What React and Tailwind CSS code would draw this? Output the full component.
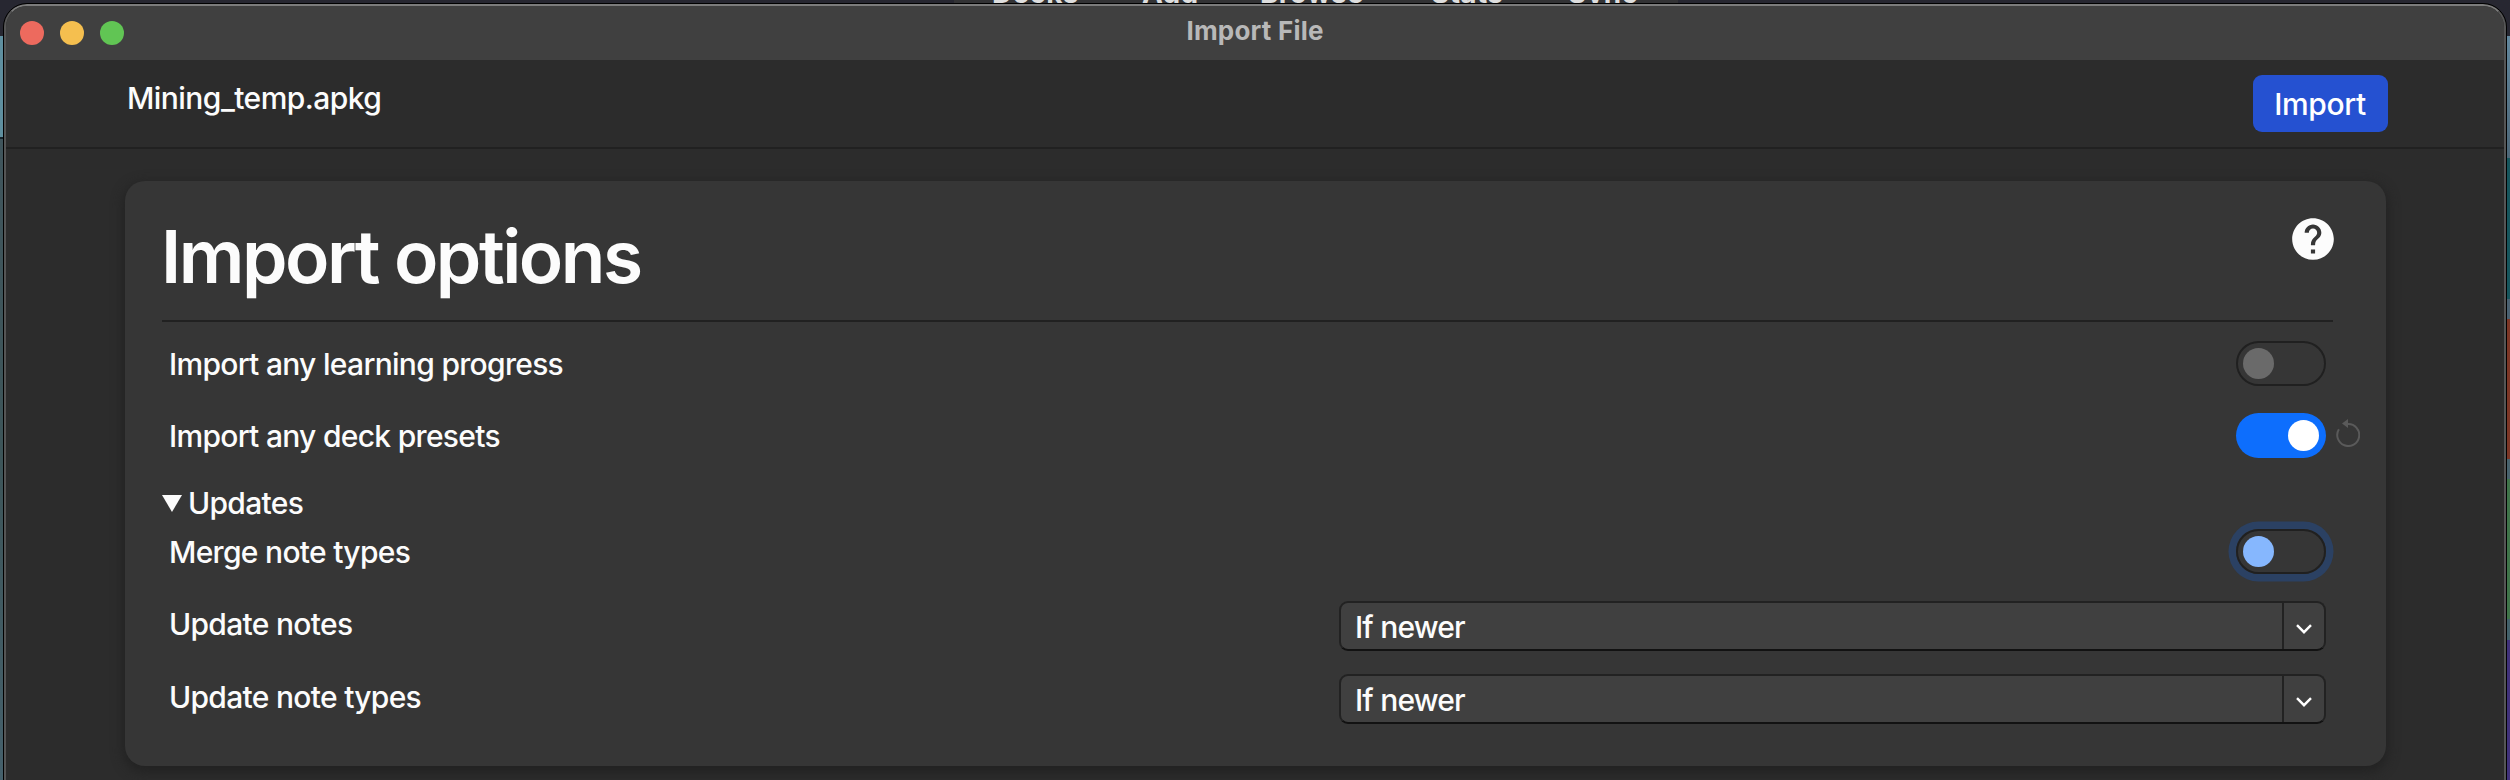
import { MdHelp } from "react-icons/md";

const menuItems = [
  { label: "Decks", box: "ml-[38px] w-[150px]" },
  { label: "Add", box: "w-[118px]" },
  { label: "Browse", box: "w-[171px]" },
  { label: "Stats", box: "w-[137px]" },
  { label: "Sync", box: "w-[80px]" },
];

function Toggle({ on, focused }) {
  const track = on
    ? "bg-[#0d6efd] justify-end"
    : focused
      ? "border-2 border-[#202020] px-[5px] shadow-[0_0_0_7.5px_#2b4163]"
      : "border-2 border-[#202020] px-[5px]";
  const knob = on ? "bg-white" : focused ? "bg-[#86b7fe]" : "bg-[#6a6a6a]";
  return (
    <button className={`flex h-[45px] w-[90px] items-center rounded-full ${on ? "px-[7px]" : ""} ${track}`}>
      <span className={`size-[31px] rounded-full ${knob}`} />
    </button>
  );
}

function ResetIcon() {
  return (
    <svg viewBox="0 0 24 28" className="-mt-1 h-7 w-6" fill="none">
      <path d="M2.9 10.2A11 11 0 1 0 12 5" stroke="#5a5a5a" strokeWidth="2" />
      <path d="M6 4.6 12 0V9Z" fill="#5a5a5a" />
    </svg>
  );
}

function Select({ value }) {
  return (
    <div className="mt-[7px] flex h-[50px] w-[987px] rounded-[9px] border-2 border-[#222] border-b-[#121212] bg-[#404040]">
      <span className="flex-1 pl-[14px] leading-[48px] tracking-[-0.8px]">{value}</span>
      <span className="flex w-[42px] items-center justify-center border-l-2 border-[#222]">
        <svg viewBox="0 0 16 10" className="mt-1.5 h-2.5 w-4" fill="none">
          <path d="M1 1.2 8 8.2 15 1.2" stroke="#fff" strokeWidth="2.4" />
        </svg>
      </span>
    </div>
  );
}

function Row({ label, height, children, extra }) {
  return (
    <div className={`flex items-center pl-[7px] ${height}`}>
      <span className="flex-1 pt-[3px] tracking-[-0.7px]">{label}</span>
      {children}
      <div className="ml-2.5 w-[13px]">
        <div className="w-6">{extra}</div>
      </div>
    </div>
  );
}

export default function App() {
  return (
    <div className="relative h-[780px] w-[2510px] overflow-hidden bg-black font-[Inter,sans-serif] text-[30px] font-medium text-[#fcfcfc]">
      <div className="flex h-full justify-between">
        <div className="flex w-[3px] flex-col">
          <div className="h-[137px] shrink-0 bg-[#5f8f9f]" />
          <div className="h-0.5 bg-[#16242c]" />
          <div className="flex-1 bg-linear-to-b from-[#40555c] via-[#3d5559] to-[#45606b]" />
        </div>
        <div className="flex w-[3px] flex-col">
          <div className="h-[158px] shrink-0 bg-linear-to-b from-[#6790a8] to-[#4c6677]" />
          <div className="h-[141px] bg-[#16555c]" />
          <div className="h-5 bg-[#4a6070]" />
          <div className="h-[140px] bg-[#7d3626]" />
          <div className="h-5 bg-[#48626d]" />
          <div className="h-[140px] bg-[#3f7449]" />
          <div className="h-[21px] bg-[#42606a]" />
          <div className="flex-1 bg-[#40317a]" />
        </div>
      </div>
      <div className="absolute inset-x-0 top-0 flex h-9 items-start bg-[#272731]">
        <div className="ml-[954px] flex h-9 w-[724px] bg-[#333335] text-[28px] font-bold tracking-[0.3px] text-[#dedede]">
          {menuItems.map((m) => (
            <span key={m.label} className={`-mt-[23px] block h-8 leading-8 ${m.box}`}>{m.label}</span>
          ))}
        </div>
      </div>

      <div className="absolute inset-x-[3px] top-[3px] bottom-[-30px] flex flex-col overflow-hidden rounded-[24px] border border-black bg-[#2c2c2c]">
        <div className="flex flex-1 flex-col overflow-hidden rounded-[23px] border-2 border-[#555] border-t-[#7c7c7c] bg-[#2c2c2c]">
          <div className="flex h-[54px] shrink-0 items-center bg-[#404040]">
            <div className="flex flex-1">
              <div className="flex gap-4 pl-3.5">
                <span className="size-6 rounded-full bg-[#ed6a5e]" />
                <span className="size-6 rounded-full bg-[#f5bf4f]" />
                <span className="size-6 rounded-full bg-[#61c554]" />
              </div>
            </div>
            <span className="-mt-[5px] text-[26px] font-bold tracking-[0.2px] text-[#b8b8b8]">Import File</span>
            <div className="flex-1" />
          </div>
          <header className="flex h-[89px] shrink-0 items-start justify-between border-b-2 border-[#212121] pt-[15px] pr-[116px] pl-[121px]">
            <span className="leading-[46px] tracking-[-0.55px]">Mining_temp.apkg</span>
            <button className="h-[57px] w-[135px] rounded-[9px] bg-[#2551d1] pt-px pr-px leading-[57px] tracking-[-0.4px] text-white">Import</button>
          </header>
          <main className="mx-[119px] mt-8 h-[585px] w-[2261px] shrink-0 rounded-[20px] bg-[#363636] px-[37px] shadow-[0_4px_12px_2px_#222]">
            <div className="mr-[16px] flex h-[141px] justify-between border-b-2 border-[#212121]">
              <h1 className="-ml-px pt-[34px] text-[73px] leading-[84px] font-semibold tracking-[-2.5px]">Import options</h1>
              <MdHelp className="-mr-[5px] mt-[33px] size-[50px]" />
            </div>
            <div className="pt-[5px]">
              <Row label="Import any learning progress" height="h-[72px]"><Toggle /></Row>
              <Row label="Import any deck presets" height="h-[72px]" extra={<ResetIcon />}><Toggle on /></Row>
              <div className="flex h-[45px] items-center gap-[6px] pt-[20px]">
                <svg viewBox="0 0 20 17" className="h-[17px] w-5"><path d="M0 0H20L10 17Z" fill="#fcfcfc" /></svg>
                <span className="tracking-[-0.7px]">Updates</span>
              </div>
              <Row label="Merge note types" height="h-[70px]"><Toggle focused /></Row>
              <Row label="Update notes" height="h-[73px]"><Select value="If newer" /></Row>
              <Row label="Update note types" height="h-[73px]"><Select value="If newer" /></Row>
            </div>
          </main>
        </div>
      </div>
    </div>
  );
}
